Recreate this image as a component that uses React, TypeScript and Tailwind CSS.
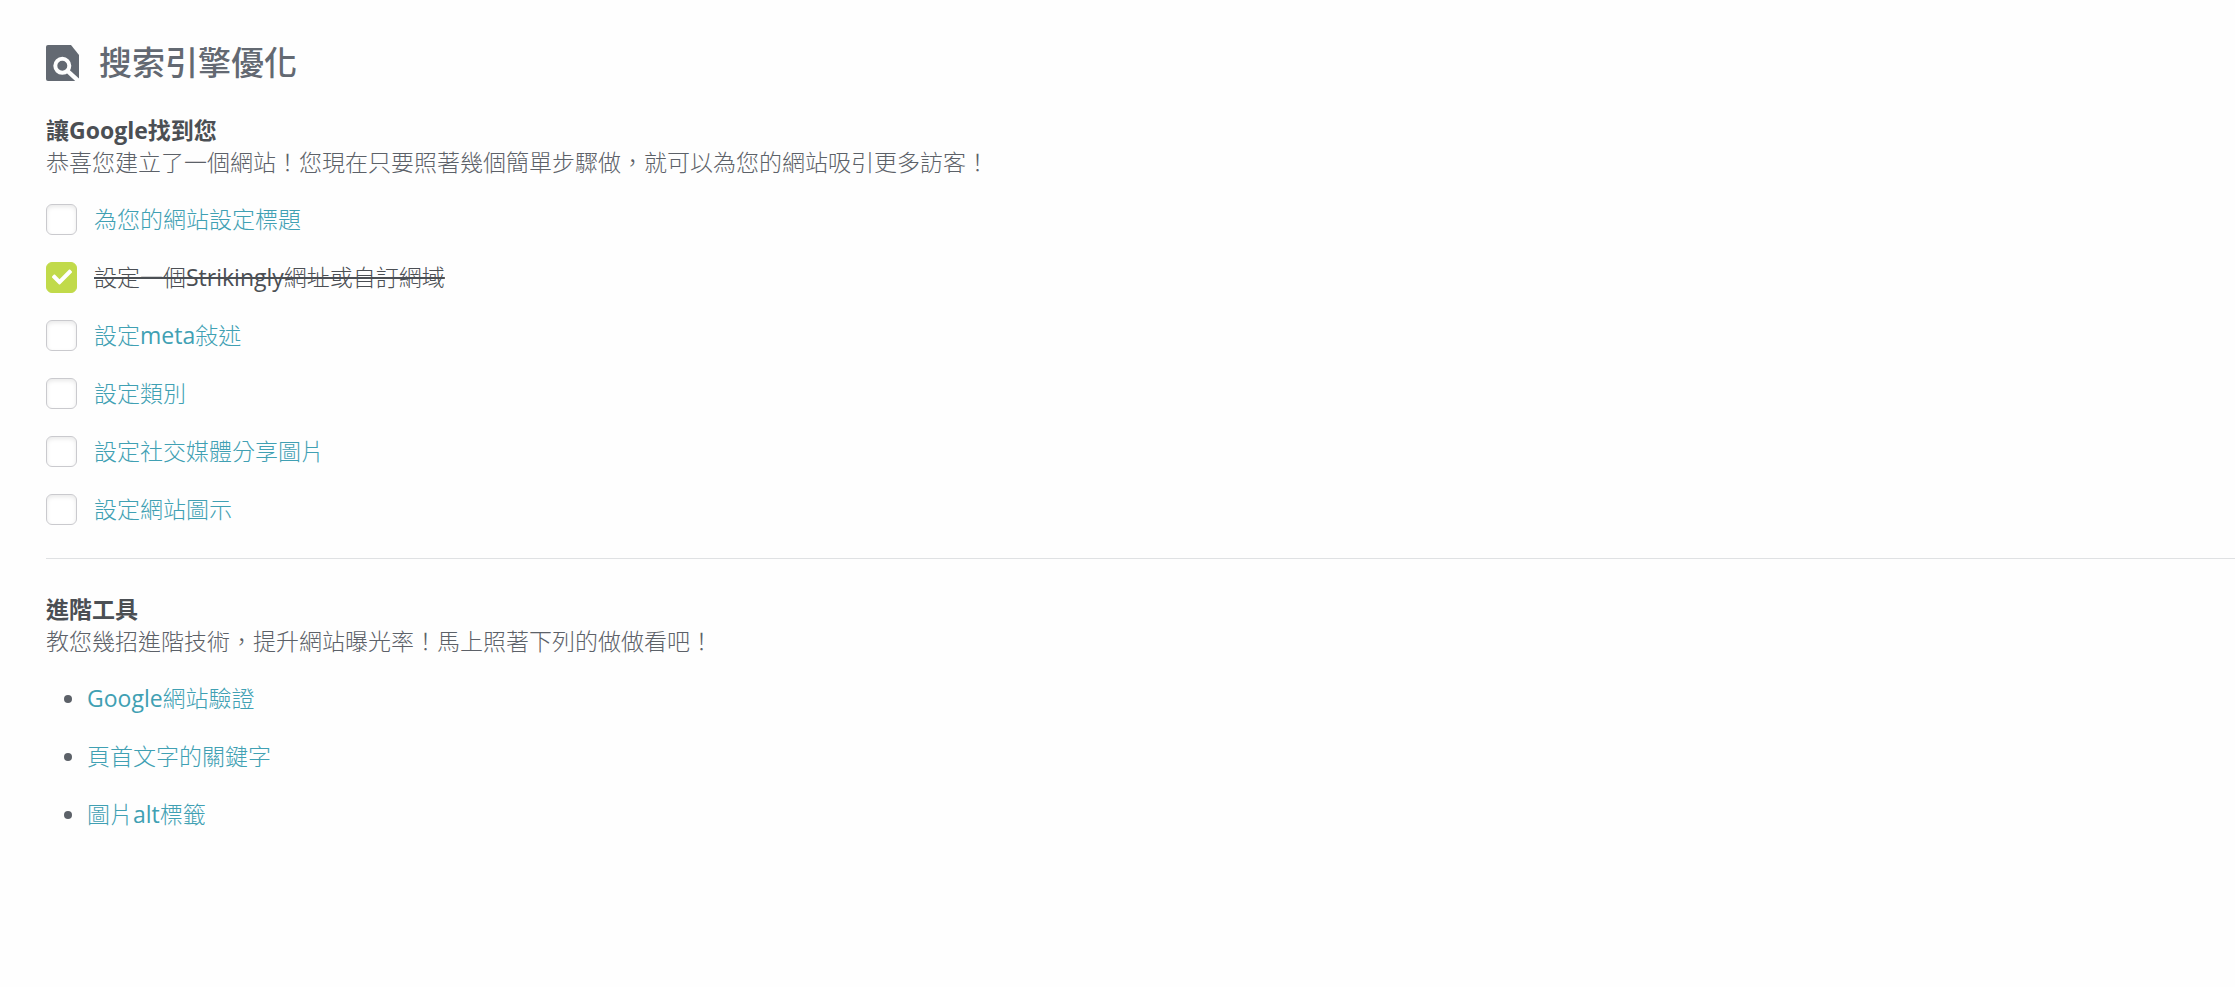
import { FaCheck } from "react-icons/fa";

const checklist = [
  { id: "title", label: "為您的網站設定標題", done: false },
  { id: "domain", label: "設定一個Strikingly網址或自訂網域", done: true },
  { id: "meta", label: "設定meta敍述", done: false },
  { id: "category", label: "設定類別", done: false },
  { id: "social", label: "設定社交媒體分享圖片", done: false },
  { id: "favicon", label: "設定網站圖示", done: false },
];

const advancedTools = ["Google網站驗證", "頁首文字的關鍵字", "圖片alt標籤"];

function SeoIcon() {
  return (
    <svg viewBox="0 0 33 36" className="h-9 w-[33px] shrink-0" aria-hidden="true">
      <path d="M2 0h23l8 10v26H2a2 2 0 0 1-2-2V2a2 2 0 0 1 2-2z" fill="#636972" />
      <circle cx="16.3" cy="20.8" r="7" fill="none" stroke="#fefefe" strokeWidth="4" />
      <path d="M21 25.5L33 36.5" stroke="#fefefe" strokeWidth="4.4" />
    </svg>
  );
}

function ChecklistItem({ id, label, done }: { id: string; label: string; done: boolean }) {
  return (
    <li className="flex h-[58px] items-center gap-[17px]">
      <span className="grid">
        <input
          id={id}
          type="checkbox"
          defaultChecked={done}
          aria-labelledby={`${id}-label`}
          className="peer col-start-1 row-start-1 size-[31px] appearance-none rounded-md border border-[#cacace] bg-white shadow-[inset_0_2px_4px_rgba(0,0,0,0.09)] checked:border-[#c1da4a] checked:bg-[#c1da4a] checked:shadow-none"
        />
        <FaCheck className="pointer-events-none invisible col-start-1 row-start-1 size-5 place-self-center text-white peer-checked:visible" />
      </span>
      {done ? (
        <label id={`${id}-label`} htmlFor={id} className="text-[#4b4f54] line-through decoration-2">
          {label}
        </label>
      ) : (
        <a id={`${id}-label`} href="#" className="text-[#40a0b3]">
          {label}
        </a>
      )}
    </li>
  );
}

export default function App() {
  return (
    <main
      lang="zh-Hant"
      className="min-h-screen bg-[#fefefe] pt-[41px] pl-[46px] font-['Open_Sans','Noto_Sans_CJK_TC_Light','Noto_Sans_CJK_TC',sans-serif] text-[23px] leading-[33px] text-[#5c6168]"
    >
      <header className="flex items-center gap-5">
        <SeoIcon />
        <h1 className="font-['Open_Sans','Noto_Sans_CJK_TC',sans-serif] text-[33px] leading-[44px] font-medium text-[#636972]">
          搜索引擎優化
        </h1>
      </header>

      <section className="mt-[29px]">
        <h2 className="font-['Open_Sans','Noto_Sans_CJK_TC',sans-serif] leading-8 font-bold text-[#4b4f54]">
          讓Google找到您
        </h2>
        <p>恭喜您建立了一個網站！您現在只要照著幾個簡單步驟做，就可以為您的網站吸引更多訪客！</p>
        <ul className="mt-[11px]">
          {checklist.map((item) => (
            <ChecklistItem key={item.id} {...item} />
          ))}
        </ul>
      </section>

      <hr className="mt-5 border-[#dfe1e3]" />

      <section className="mt-[34px]">
        <h2 className="font-['Open_Sans','Noto_Sans_CJK_TC',sans-serif] leading-8 font-bold text-[#4b4f54]">
          進階工具
        </h2>
        <p>教您幾招進階技術，提升網站曝光率！馬上照著下列的做做看吧！</p>
        <ul className="mt-[11px] list-disc pl-[41px]">
          {advancedTools.map((tool) => (
            <li key={tool} className="leading-[58px]">
              <a href="#" className="text-[#40a0b3]">
                {tool}
              </a>
            </li>
          ))}
        </ul>
      </section>
    </main>
  );
}
